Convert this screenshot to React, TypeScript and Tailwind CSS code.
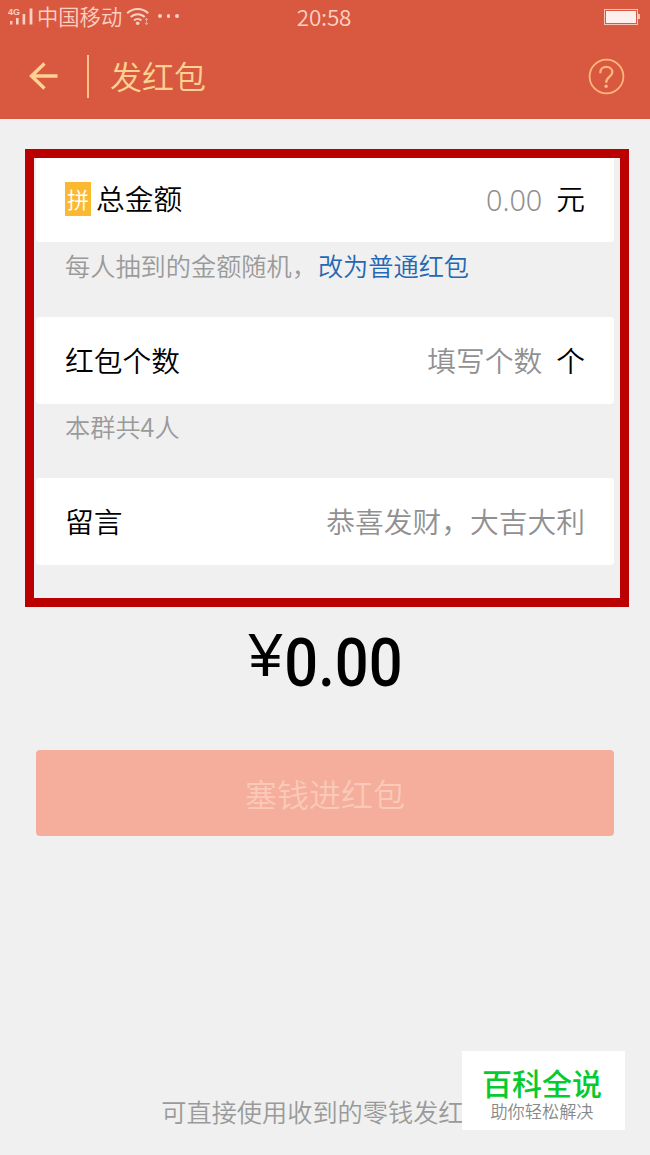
import type { ReactNode } from 'react';

const StatusBar = () => (
    <div className="flex h-[34px] items-center text-[#fbd0c3]">
        <div className="flex flex-1 items-center pl-2">
            <svg
                className="shrink-0"
                width="26"
                height="20"
                viewBox="0 0 26 20"
                fill="currentColor"
            >
                <text
                    x="0"
                    y="7.5"
                    fontSize="9"
                    fontWeight="700"
                    fontFamily="Liberation Sans, sans-serif"
                >
                    4G
                </text>
                <rect x="2" y="14" width="2.4" height="3.5" />
                <rect x="8" y="11" width="2.6" height="6.5" />
                <rect x="14.6" y="7" width="2.6" height="10.5" />
                <rect x="21.6" y="1.5" width="2.8" height="16" />
            </svg>
            <span className="ml-[3px] -mt-[2px] shrink-0 text-[21.3px] font-[350] leading-8">中国移动</span>
            <svg
                className="ml-1 -mt-[2px] shrink-0"
                width="24"
                height="20"
                viewBox="0 0 24 20"
                fill="none"
                stroke="currentColor"
                strokeWidth="2"
            >
                <path d="M1.2 7.2a15 15 0 0 1 21 0" />
                <path d="M4.7 11a10 10 0 0 1 14 0" />
                <path d="M8 14.4a5.4 5.4 0 0 1 7.4 0" />
                <circle cx="11.7" cy="17.2" r="1.8" fill="currentColor" stroke="none" />
                <path d="M20.5 12.5v6M18.8 14l1.7-1.7 1.7 1.7M18.8 17l1.7 1.7 1.7-1.7" strokeWidth="1" opacity="0.6" />
            </svg>
            <div className="ml-2 -mt-[2px] flex gap-[5px]">
                <i className="size-[3.5px] rounded-full bg-current" />
                <i className="size-[3.5px] rounded-full bg-current" />
                <i className="size-[3.5px] rounded-full bg-current" />
            </div>
        </div>
        <span className="text-[22.5px] font-[350] tracking-[-0.2px]">20:58</span>
        <div className="flex flex-1 items-center justify-end pr-[10px] pb-px">
            <div className="h-4 w-[34px] border border-[#fbc4b6] p-px">
                <div className="h-full bg-[#fdefec]" />
            </div>
            <div className="h-[5px] w-[2px] bg-[#fbc4b6]" />
        </div>
    </div>
);

const Header = () => (
    <header className="h-[119px] bg-[#d95940]">
        <StatusBar />
        <div className="flex h-[84px] items-center pl-[29px] pr-[25px] text-[#fdd193]">
            <svg
                width="30"
                height="28"
                viewBox="0 0 30 28"
                fill="none"
                stroke="currentColor"
                strokeWidth="3.4"
            >
                <path d="M2.5 14H28.5M15.5 1.5L2.5 14L15.5 26.5" />
            </svg>
            <div className="ml-7 h-[43px] w-[2px] bg-[#fbc58a]" />
            <h1 className="ml-[21px] pb-[3px] text-[32px] font-[350] leading-none">发红包</h1>
            <svg
                className="ml-auto"
                width="37"
                height="37"
                viewBox="0 0 37 37"
                fill="none"
                stroke="#fbb77c"
                strokeWidth="1.8"
            >
                <circle cx="18.5" cy="18.5" r="16.9" />
                <path d="M12.4 15.3V14.4C12.4 11 15 8.9 18.3 8.9S24.3 11 24.3 14.2C24.3 18.6 18.1 18.8 18.1 24.8" strokeWidth="2.2" />
                <circle cx="18.1" cy="28.2" r="1.7" fill="#fbb77c" stroke="none" />
            </svg>
        </div>
    </header>
);

const Row = ({ label, children }: { label: ReactNode; children: ReactNode }) => (
    <div className="flex h-[87px] items-center justify-between rounded-[4px] bg-white px-[29px] text-[28.75px] font-[350] leading-none">
        <div className="flex items-center text-black">{label}</div>
        <div className="flex items-center text-[#909090]">{children}</div>
    </div>
);

const Hint = ({ children }: { children: ReactNode }) => (
    <p className="h-[74px] pl-[29px] pt-[4px] text-[25.2px] font-[350] leading-9 text-[#9a9a9a]">
        {children}
    </p>
);

export default function App() {
    return (
        <div className="relative flex h-[1155px] w-[650px] flex-col overflow-hidden bg-[#f0f0f0] font-['Noto_Sans_CJK_SC',sans-serif]">
            <Header />
            <section className="ml-[25px] mt-[30px] h-[458px] w-[604px] shrink-0 overflow-hidden border-[9px] border-[#ba0000] pl-[2px] pr-[6px]">
                <div className="-mt-[3px] mb-px">
                    <Row
                        label={
                            <>
                                <span className="mr-[5px] flex h-[34px] w-[26px] items-center justify-center bg-[#fbb932] pb-[2px] text-[22px] text-white">
                                    拼
                                </span>
                                总金额
                            </>
                        }
                    >
                        <span className="pt-[3px] font-['Noto_Sans',sans-serif] font-light">0.00</span>
                        <span className="ml-[14px] text-black">元</span>
                    </Row>
                </div>
                <Hint>
                    每人抽到的金额随机，
                    <a className="ml-px text-[#2468b4]">改为普通红包</a>
                </Hint>
                <Row label="红包个数">
                    填写个数
                    <span className="ml-[14px] text-black">个</span>
                </Row>
                <Hint>本群共4人</Hint>
                <Row label="留言">恭喜发财，大吉大利</Row>
            </section>

            <div className="mt-[20px] flex h-[83px] items-start justify-center text-black">
                <span className="font-['Liberation_Sans',sans-serif] text-[61px] leading-[56px]">¥</span>
                <span className="-ml-[6px] -mr-[8px] scale-x-[0.89] font-['Roboto',sans-serif] text-[67px] font-medium leading-[72px]">
                    0.00
                </span>
            </div>

            <button className="mx-9 mt-10 h-[86px] shrink-0 rounded-[4px] bg-[#f4ae9b] text-[32px] font-[350] text-[#fbc9b8]">
                塞钱进红包
            </button>

            <p className="mt-[257px] text-center text-[25.2px] font-[350] leading-9 text-[#9a9a9a]">
                可直接使用收到的零钱发红包
            </p>

            <div className="absolute bottom-[25px] right-[25px] flex h-[79px] w-[163px] flex-col items-center bg-white pt-[16px] pr-[3px]">
                <strong className="text-[30px] font-medium leading-[30px] text-[#06cb2e]">百科全说</strong>
                <span className="mt-[4px] text-[17.2px] font-[350] leading-5 text-[#888]">助你轻松解决</span>
            </div>
        </div>
    );
}
